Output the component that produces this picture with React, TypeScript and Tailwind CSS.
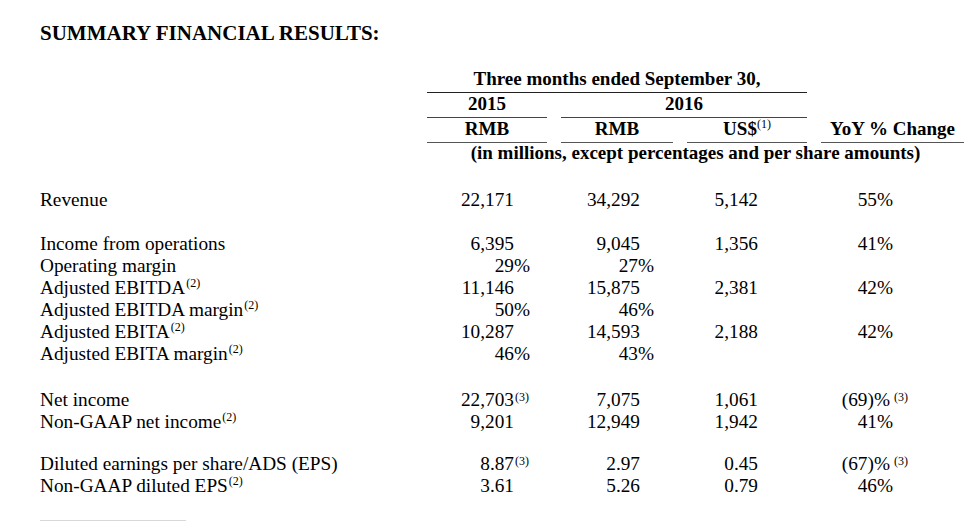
import React from "react";

type Cell = { v: string; sup?: string; pct?: boolean } | null;
type Row = { label: string; labelSup?: string; cells: Cell[] } | { spacer: string };

const n = (v: string, sup?: string): Cell => ({ v, sup });
const p = (v: string, sup?: string): Cell => ({ v, sup, pct: true });

const rows: Row[] = [
  { label: "Revenue", cells: [n("22,171"), n("34,292"), n("5,142"), n("55%")] },
  { spacer: "h-[22px]" },
  { label: "Income from operations", cells: [n("6,395"), n("9,045"), n("1,356"), n("41%")] },
  { label: "Operating margin", cells: [p("29%"), p("27%"), null, null] },
  { label: "Adjusted EBITDA", labelSup: "(2)", cells: [n("11,146"), n("15,875"), n("2,381"), n("42%")] },
  { label: "Adjusted EBITDA margin", labelSup: "(2)", cells: [p("50%"), p("46%"), null, null] },
  { label: "Adjusted EBITA", labelSup: "(2)", cells: [n("10,287"), n("14,593"), n("2,188"), n("42%")] },
  { label: "Adjusted EBITA margin", labelSup: "(2)", cells: [p("46%"), p("43%"), null, null] },
  { spacer: "h-[24px]" },
  { label: "Net income", cells: [n("22,703", "(3)"), n("7,075"), n("1,061"), n("(69)%", "(3)")] },
  { label: "Non-GAAP net income", labelSup: "(2)", cells: [n("9,201"), n("12,949"), n("1,942"), n("41%")] },
  { spacer: "h-[20px]" },
  { label: "Diluted earnings per share/ADS (EPS)", cells: [n("8.87", "(3)"), n("2.97"), n("0.45"), n("(67)%", "(3)")] },
  { label: "Non-GAAP diluted EPS", labelSup: "(2)", cells: [n("3.61"), n("5.26"), n("0.79"), n("46%")] },
];

function Sup({ children }: { children: React.ReactNode }) {
  return <span className="relative -top-[7px] text-[12px] leading-none ml-[1px]">{children}</span>;
}

function NumCell({ cell, col }: { cell: Cell; col: number }) {
  if (!cell) return <div />;
  let pr = "";
  if (col === 0) pr = cell.pct ? "pr-[17px]" : "pr-[33px]";
  else if (col === 1) pr = cell.pct ? "pr-[19px]" : "pr-[33px]";
  else if (col === 2) pr = "pr-[49px]";
  else pr = cell.sup ? "pr-[74px]" : "pr-[71px]";
  return (
    <div className={`text-right ${pr}`}>
      <span className="relative">
        {cell.v}
        {cell.sup && (
          <span className={`absolute top-[2px] text-[12px] leading-none ${col === 3 ? "left-[calc(100%+4px)]" : "left-[calc(100%+1px)]"}`}>
            {cell.sup}
          </span>
        )}
      </span>
    </div>
  );
}

export default function App() {
  const grid = "grid grid-cols-[373px_120px_112px_120px_143px] gap-x-[14px]";
  return (
    <div
      className="w-[977px] h-[521px] bg-white text-black pl-[40px] pt-[21px] overflow-hidden"
      style={{ fontFamily: '"Liberation Serif", "Times New Roman", serif' }}
    >
      <h1 className="text-[21px] leading-[24px] font-bold">SUMMARY FINANCIAL RESULTS:</h1>

      <div className={`${grid} mt-[23px] font-bold text-[19px] leading-[20px]`}>
        <div />
        <div className="col-span-3 text-center pt-[1px] pb-[3px] border-b border-[#222]">
          Three months ended September 30,
        </div>
        <div />

        <div />
        <div className="text-center pt-[1px] pb-[3px] border-b border-[#444]">2015</div>
        <div className="col-span-2 text-center pt-[1px] pb-[3px] border-b border-[#444]">2016</div>
        <div />

        <div />
        <div className="text-center pt-[1px] pb-[3px] border-b border-[#555]">RMB</div>
        <div className="text-center pt-[1px] pb-[3px] border-b border-[#555]">RMB</div>
        <div className="text-center pt-[1px] pb-[3px] border-b border-[#555]">
          US$<span className="relative -top-[7px] text-[12px] font-normal leading-none">(1)</span>
        </div>
        <div className="text-center pt-[1px] pb-[3px] border-b border-[#555]">YoY % Change</div>

        <div />
        <div className="col-span-4 text-center">
          (in millions, except percentages and per share amounts)
        </div>
      </div>

      <div className="mt-[26px] text-[19.3px] leading-[22px]">
        {rows.map((r, i) =>
          "spacer" in r ? (
            <div key={i} className={r.spacer} />
          ) : (
            <div key={i} className={`${grid} h-[22px]`}>
              <div className="whitespace-nowrap">
                {r.label}
                {r.labelSup && <Sup>{r.labelSup}</Sup>}
              </div>
              {r.cells.map((c, j) => (
                <NumCell key={j} cell={c} col={j} />
              ))}
            </div>
          )
        )}
      </div>

      <div className="mt-[23px] w-[146px] h-px bg-[#d8d8d8]" />
    </div>
  );
}
